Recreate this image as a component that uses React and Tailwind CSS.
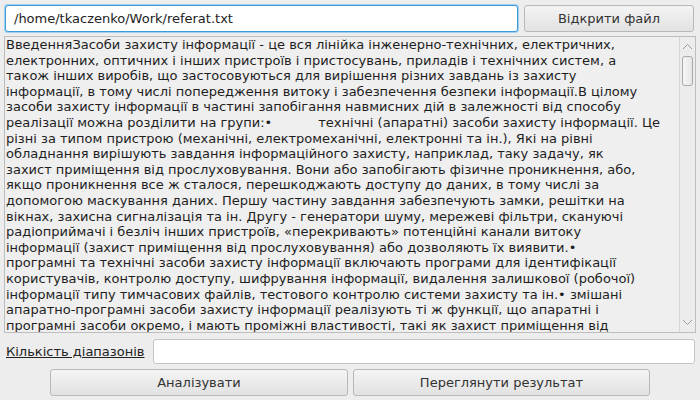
import React from "react";

const LINES = [
  "ВведенняЗасоби захисту інформації - це вся лінійка інженерно-технічних, електричних,",
  "електронних, оптичних і інших пристроїв і пристосувань, приладів і технічних систем, а",
  "також інших виробів, що застосовуються для вирішення різних завдань із захисту",
  "інформації, в тому числі попередження витоку і забезпечення безпеки інформації.В цілому",
  "засоби захисту інформації в частині запобігання навмисних дій в залежності від способу",
  "TAB",
  "різні за типом пристрою (механічні, електромеханічні, електронні та ін.), Які на рівні",
  "обладнання вирішують завдання інформаційного захисту, наприклад, таку задачу, як",
  "захист приміщення від прослуховування. Вони або запобігають фізичне проникнення, або,",
  "якщо проникнення все ж сталося, перешкоджають доступу до даних, в тому числі за",
  "допомогою маскування даних. Першу частину завдання забезпечують замки, решітки на",
  "вікнах, захисна сигналізація та ін. Другу - генератори шуму, мережеві фільтри, скануючі",
  "радіоприймачі і безліч інших пристроїв, «перекривають» потенційні канали витоку",
  "інформації (захист приміщення від прослуховування) або дозволяють їх виявити.•",
  "програмні та технічні засоби захисту інформації включають програми для ідентифікації",
  "користувачів, контролю доступу, шифрування інформації, видалення залишкової (робочої)",
  "інформації типу тимчасових файлів, тестового контролю системи захисту та ін.• змішані",
  "апаратно-програмні засоби захисту інформації реалізують ті ж функції, що апаратні і",
  "програмні засоби окремо, і мають проміжні властивості, такі як захист приміщення від",
  "прослуховування.• організаційні засоби захисту інформації складаються з",
];

function Btn({ children, className }) {
  return (
    <button
      className={
        "h-[27px] rounded-[3px] border border-[#b8b8b8] bg-gradient-to-b from-[#f4f4f4] to-[#e2e2e2] text-[13px] text-[#333]" +
        " " +
        className
      }
    >
      {children}
    </button>
  );
}

export default function App() {
  return (
    <div
      className="w-[700px] h-[400px] bg-[#ededed] overflow-hidden flex flex-col text-[#333]"
      style={{ fontFamily: '"DejaVu Sans", sans-serif' }}
    >
      <div className="flex gap-[6px] pl-[5px] pr-[6px] pt-[5px]">
        <div className="w-[513px] h-[27px] rounded-[3px] border border-[#3d9bd8] bg-white flex items-center pl-[8px] text-[13px] text-[#222] shadow-[0_0_0_1px_#9fd0ef]">
          /home/tkaczenko/Work/referat.txt
        </div>
        <Btn className="w-[170px]">Відкрити файл</Btn>
      </div>

      <div className="mt-[4px] ml-[4px] w-[692px] h-[297px] border border-[#bdbdbd] bg-[#efefef] flex">
        <div className="flex-1 min-w-0 overflow-hidden pl-[1px] text-[13px] leading-[15.6px] text-[#1e1e1e]">
          {LINES.map((l, i) =>
            l === "TAB" ? (
              <div key={i} className="whitespace-nowrap">
                реалізації можна розділити на групи:•<span className="inline-block w-[46px]" />технічні (апаратні) засоби захисту інформації. Це
              </div>
            ) : (
              <div key={i} className="whitespace-nowrap">
                {l}
              </div>
            )
          )}
        </div>
        <div className="w-[16px] shrink-0 border-l border-[#d6d6d6] bg-[#ececec] flex flex-col items-center pt-[3px]">
          <svg width="11" height="7" viewBox="0 0 11 7" className="mt-[3px]">
            <path d="M1 6 L5.5 1.5 L10 6" stroke="#9a9a9a" strokeWidth="1" fill="none" />
          </svg>
          <div className="mt-[6px] w-[11px] h-[30px] rounded-[3px] border border-[#a9a9a9] bg-gradient-to-r from-[#f6f6f6] to-[#e6e6e6]" />
          <div className="flex-1" />
          <svg width="11" height="7" viewBox="0 0 11 7" className="mb-[6px]">
            <path d="M1 1 L5.5 5.5 L10 1" stroke="#9a9a9a" strokeWidth="1" fill="none" />
          </svg>
        </div>
      </div>

      <div className="flex items-center mt-[6px] pl-[6px] pr-[5px]">
        <span className="text-[13px] underline text-[#222] w-[147px]">Кількість діапазонів</span>
        <div className="flex-1 h-[25px] rounded-[3px] border border-[#c4c4c4] bg-white" />
      </div>

      <div className="flex gap-[5px] mt-[5px] pl-[50px]">
        <Btn className="w-[298px]">Аналізувати</Btn>
        <Btn className="w-[297px]">Переглянути результат</Btn>
      </div>
    </div>
  );
}
